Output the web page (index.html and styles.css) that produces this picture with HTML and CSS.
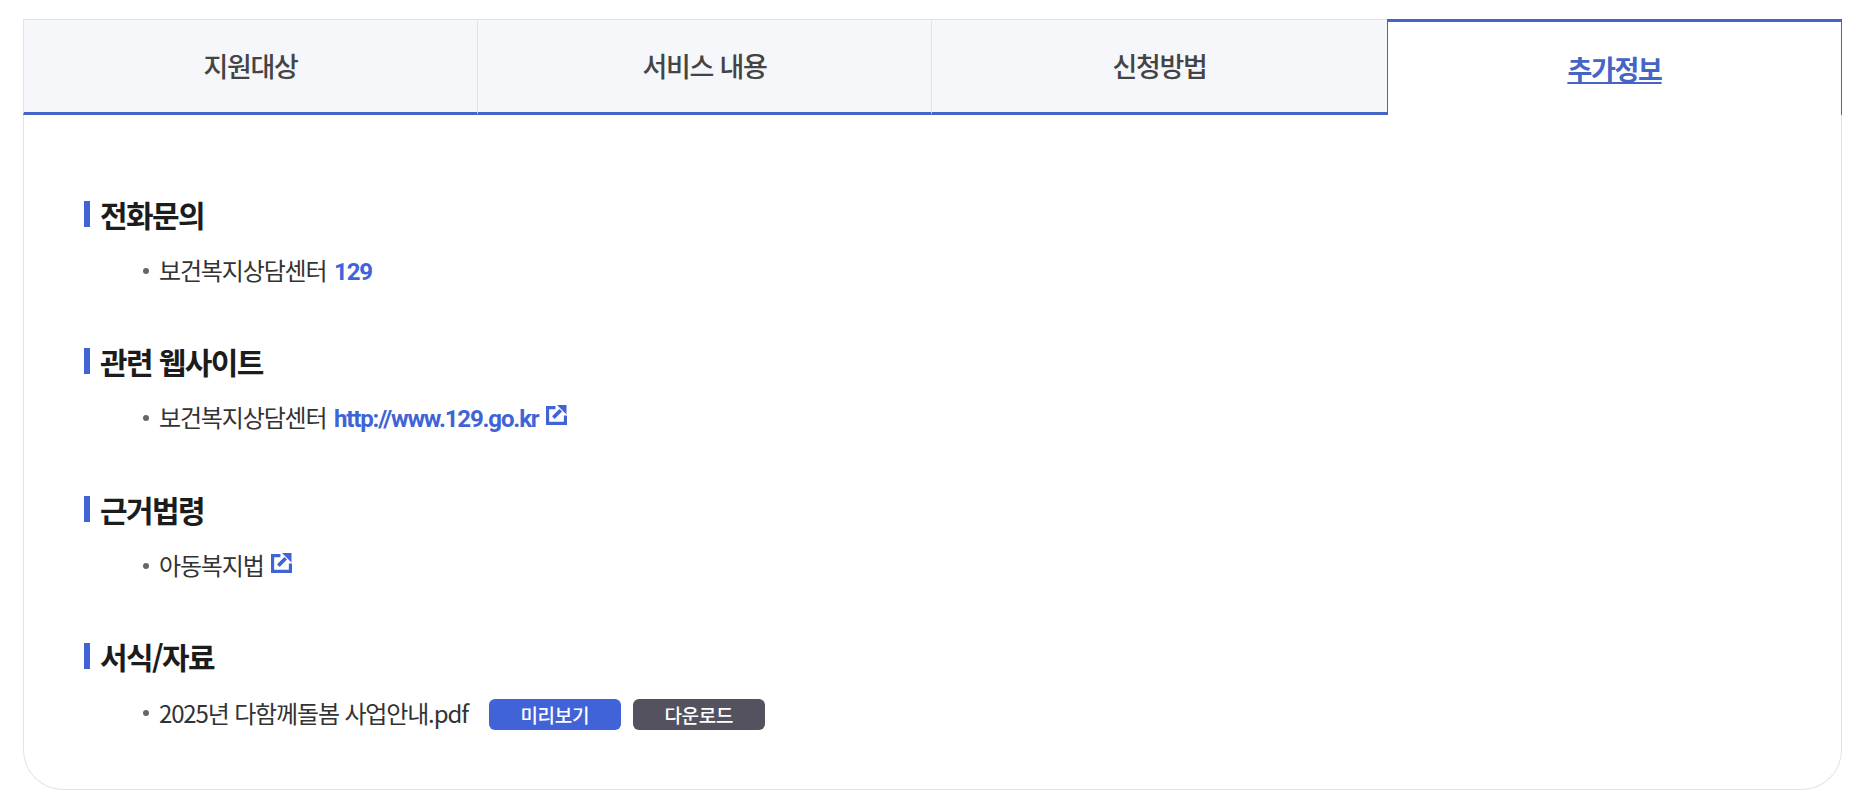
FILE: index.html
```html
<!DOCTYPE html>
<html lang="ko">
<head>
  <meta charset="UTF-8" />
  <meta name="viewport" content="width=device-width, initial-scale=1.0"/>
  <title>추가정보</title>
  <link rel="stylesheet" href="styles.css">
</head>
<body>

  <div class="card">
    <ul class="tabs">
      <li class="tab">지원대상</li>
      <li class="tab">서비스 내용</li>
      <li class="tab">신청방법</li>
      <li class="tab active"><a href="#">추가정보</a></li>
    </ul>

    <div class="content">
      <section class="info">
        <h3 class="info-title">전화문의</h3>
        <ul class="info-list">
          <li>보건복지상담센터 <a class="link" href="#">129</a></li>
        </ul>
      </section>

      <section class="info">
        <h3 class="info-title">관련 웹사이트</h3>
        <ul class="info-list">
          <li>보건복지상담센터 <a class="link" href="#">http://www.129.go.kr</a>
            <svg class="ext" viewBox="0 0 20 20"><path d="M9 3.500H1.500v15h17V11" fill="none" stroke="#4063d8" stroke-width="3"/><path d="M7 13 14 6" fill="none" stroke="#4063d8" stroke-width="3.500"/><path d="M10.500 1h9v9z" fill="#4063d8"/></svg>
          </li>
        </ul>
      </section>

      <section class="info">
        <h3 class="info-title">근거법령</h3>
        <ul class="info-list">
          <li>아동복지법
            <svg class="ext" viewBox="0 0 20 20"><path d="M9 3.500H1.500v15h17V11" fill="none" stroke="#4063d8" stroke-width="3"/><path d="M7 13 14 6" fill="none" stroke="#4063d8" stroke-width="3.500"/><path d="M10.500 1h9v9z" fill="#4063d8"/></svg>
          </li>
        </ul>
      </section>

      <section class="info">
        <h3 class="info-title">서식/자료</h3>
        <ul class="info-list">
          <li class="file">
            <span>2025년 다함께돌봄 사업안내.pdf</span>
            <a class="btn preview" href="#">미리보기</a>
            <a class="btn download" href="#">다운로드</a>
          </li>
        </ul>
      </section>
    </div>
  </div>

</body>
</html>
```

FILE: styles.css
```css
:root {
  --blue: #4063d8;
  --tab-blue: #4465c5;
  --line: #e1e3ea;
  --text: #222222;
}

* {
  margin: 0;
  padding: 0;
  box-sizing: border-box;
}

body {
  font-family: "Noto Sans CJK KR", "Noto Sans", sans-serif;
  background: #ffffff;
  color: var(--text);
  padding: 19px 22px 20px 23px;
}

ul {
  list-style: none;
}

a {
  text-decoration: none;
}

.card {
  height: 771px;
  border: 1px solid var(--line);
  border-top: none;
  border-radius: 0 0 40px 40px;
}

.tabs {
  display: grid;
  grid-template-columns: 454px 454px 456px 1fr;
  height: 96px;
  margin: 0 -1px;
}

.tab {
  display: flex;
  align-items: center;
  justify-content: center;
  background: #f5f7fb;
  border-top: 1px solid var(--line);
  border-left: 1px solid var(--line);
  border-bottom: 3px solid var(--tab-blue);
  font-size: 27px;
  font-weight: 500;
  letter-spacing: -1.3px;
  color: #444444;
  padding-bottom: 2px;
}

.tab.active {
  background: #ffffff;
  border: 1px solid var(--tab-blue);
  border-top: 3px solid var(--tab-blue);
  border-bottom: none;
  font-weight: 700;
  padding-bottom: 0;
}

.tab.active a {
  color: var(--tab-blue);
  text-decoration: underline;
}

.content {
  padding: 78px 60px 0;
}

.info {
  height: 147.4px;
}

.info-title {
  position: relative;
  font-size: 30px;
  line-height: 42px;
  letter-spacing: -1.6px;
  font-weight: 700;
  color: #1c1c1c;
  padding-left: 16px;
}

.info-title::before {
  content: "";
  position: absolute;
  left: 0;
  top: 8px;
  width: 6px;
  height: 26px;
  background: var(--blue);
}

.info-list {
  margin-top: 19px;
  padding-left: 59px;
}

.info-list li {
  position: relative;
  font-size: 24px;
  line-height: 32px;
  letter-spacing: -1.15px;
  color: #333333;
  padding-left: 16px;
}

.info-list li::before {
  content: "";
  position: absolute;
  left: 0;
  top: 14px;
  width: 6px;
  height: 6px;
  border-radius: 50%;
  background: #666666;
}

.link {
  margin-left: 2px;
  font-family: Roboto, sans-serif;
  font-weight: 700;
  color: var(--blue);
}

.ext {
  width: 21px;
  height: 21px;
  margin-left: 2px;
  vertical-align: 2px;
}

.file {
  display: flex;
  align-items: center;
}

.btn {
  display: block;
  width: 132px;
  height: 31px;
  margin-top: 3px;
  border-radius: 6px;
  color: #ffffff;
  font-size: 19px;
  font-weight: 500;
  letter-spacing: -0.3px;
  line-height: 31px;
  text-align: center;
}

.preview {
  margin-left: 21px;
  background: var(--blue);
}

.download {
  margin-left: 12px;
  background: #54525f;
}
```
